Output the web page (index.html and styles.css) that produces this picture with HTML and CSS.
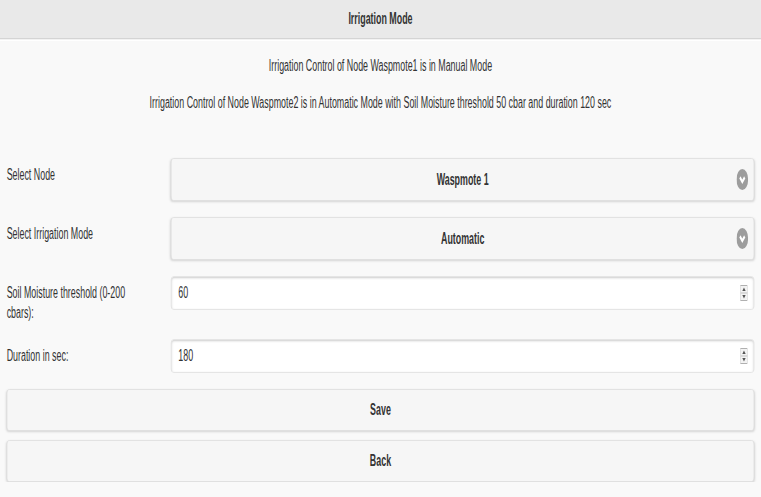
FILE: index.html
```html
<!DOCTYPE html>
<html lang="en">
<head>
    <meta charset="UTF-8">
    <meta name="viewport" content="width=device-width, initial-scale=1.0">
    <title>Irrigation Mode</title>
    <link rel="stylesheet" href="styles.css">
</head>
<body>

<div class="page">
    <header class="bar">
        <h1>Irrigation Mode</h1>
    </header>

    <main class="content">
        <div class="status">
            <p>Irrigation Control of Node Waspmote1 is in Manual Mode</p>
            <p>Irrigation Control of Node Waspmote2 is in Automatic Mode with Soil Moisture threshold 50 cbar and duration 120 sec</p>
        </div>

        <form class="settings" onsubmit="return false;">
            <div class="field">
                <label>Select Node</label>
                <div class="select-btn">
                    <span class="select-text">Waspmote 1</span>
                    <svg class="chevron" width="21" height="21" viewBox="0 0 21 21">
                        <circle cx="10.5" cy="10.5" r="10.5" fill="#9d9d9d"/>
                        <polyline points="6.2,8.4 10.5,12.8 14.8,8.4" fill="none" stroke="#fff" stroke-width="3"/>
                    </svg>
                </div>
            </div>

            <div class="field">
                <label>Select Irrigation Mode</label>
                <div class="select-btn">
                    <span class="select-text">Automatic</span>
                    <svg class="chevron" width="21" height="21" viewBox="0 0 21 21">
                        <circle cx="10.5" cy="10.5" r="10.5" fill="#9d9d9d"/>
                        <polyline points="6.2,8.4 10.5,12.8 14.8,8.4" fill="none" stroke="#fff" stroke-width="3"/>
                    </svg>
                </div>
            </div>

            <div class="field">
                <label for="threshold">Soil Moisture threshold (0-200 cbars):</label>
                <div class="input-wrap">
                    <input type="text" id="threshold" value="60">
                    <svg class="spinner" width="13" height="16" viewBox="0 0 13 16">
                        <rect x="0.5" y="0.5" width="12" height="15" fill="#f3f3f3" stroke="#b0b0b0"/>
                        <line x1="0.5" y1="8" x2="12.5" y2="8" stroke="#b0b0b0"/>
                        <polygon points="3.5,6 9.5,6 6.5,2.5" fill="#555"/>
                        <polygon points="3.5,10 9.5,10 6.5,13.5" fill="#555"/>
                    </svg>
                </div>
            </div>

            <div class="field">
                <label for="duration">Duration in sec:</label>
                <div class="input-wrap">
                    <input type="text" id="duration" value="180">
                    <svg class="spinner" width="13" height="16" viewBox="0 0 13 16">
                        <rect x="0.5" y="0.5" width="12" height="15" fill="#f3f3f3" stroke="#b0b0b0"/>
                        <line x1="0.5" y1="8" x2="12.5" y2="8" stroke="#b0b0b0"/>
                        <polygon points="3.5,6 9.5,6 6.5,2.5" fill="#555"/>
                        <polygon points="3.5,10 9.5,10 6.5,13.5" fill="#555"/>
                    </svg>
                </div>
            </div>

            <div class="actions">
                <button type="submit" class="btn">Save</button>
                <button type="button" class="btn">Back</button>
            </div>
        </form>
    </main>
</div>

</body>
</html>
```

FILE: styles.css
```css
body {
    margin: 0;
    padding: 0;
    background-color: #f9f9f9;
    color: #333;
    font-family: "Liberation Sans", Arial, sans-serif;
    font-size: 16px;
    overflow: hidden;
}

/* the app was captured squeezed sideways, so the page is laid out wide and narrowed */
.page {
    width: 1371px;
    transform: scaleX(0.555);
    transform-origin: 0 0;
}

.bar {
    height: 38px;
    display: flex;
    align-items: center;
    justify-content: center;
    background-color: #e9e9e9;
    border-bottom: 1px solid #d4d4d4;
    box-shadow: 0 1px 0 #f2f2f2, 0 2px 0 #fff;
}

.bar h1 {
    margin: 0;
    font-size: 16px;
    font-weight: bold;
}

.content {
    padding: 17px 12px 0;
}

.status {
    display: flex;
    flex-direction: column;
    gap: 17px;
    margin-bottom: 45px;
    text-align: center;
}

.status p {
    margin: 0;
    line-height: 20px;
}

.settings {
    display: flex;
    flex-direction: column;
    gap: 16px;
}

.field {
    display: grid;
    grid-template-columns: 18% 78%;
    column-gap: 4%;
    align-items: start;
}

.field label {
    padding-top: 7px;
    line-height: 20px;
}

.select-btn {
    height: 43px;
    box-sizing: border-box;
    display: grid;
    grid-template-columns: 40px 1fr 40px;
    align-items: center;
    background-color: #f6f6f6;
    border: 1px solid #ddd;
    border-radius: 5px;
    box-shadow: 0 1px 3px rgba(0, 0, 0, 0.15);
    cursor: pointer;
}

.select-text {
    grid-column: 2;
    text-align: center;
    font-weight: bold;
}

.chevron {
    grid-column: 3;
    justify-self: end;
    margin-right: 10px;
}

.input-wrap {
    height: 34px;
    box-sizing: border-box;
    display: flex;
    align-items: center;
    background-color: #fff;
    border: 1px solid #ddd;
    border-radius: 5px;
    box-shadow: inset 0 1px 3px rgba(0, 0, 0, 0.2);
}

.input-wrap input {
    flex: 1;
    min-width: 0;
    border: none;
    background: transparent;
    outline: none;
    padding: 0 12px;
    font-family: inherit;
    font-size: 16px;
    color: #333;
}

.spinner {
    margin-right: 11px;
}

.actions {
    display: flex;
    flex-direction: column;
    gap: 9px;
}

.btn {
    height: 42px;
    background-color: #f6f6f6;
    border: 1px solid #ddd;
    border-radius: 5px;
    box-shadow: 0 1px 3px rgba(0, 0, 0, 0.15);
    font-family: inherit;
    font-size: 16px;
    font-weight: bold;
    color: #333;
    cursor: pointer;
}

.btn:hover {
    background-color: #ededed;
}
```
